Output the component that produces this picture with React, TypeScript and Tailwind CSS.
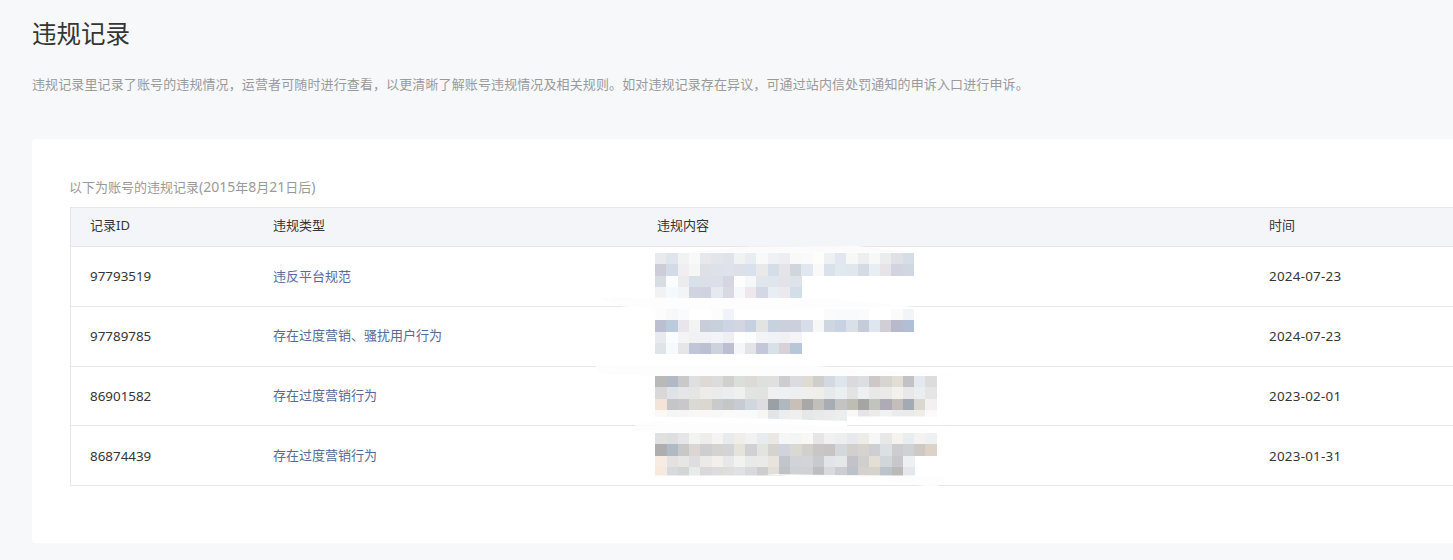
const MOSAICS = [
  {
    cols: 23,
    top: "mt-[6px]",
    rows: [
      "e9eaee e0e4ec f3f2f3 f9f9f9 e7e8eb e4e5ea e0e3ea f1f2f2 e9edf1 f8f9f8 f0f1f4 eeeef2 f9f9f8 fafafa fdfdfc eff0f3 e1e6f0 f7f8f6 eceef0 f7f8f8 ebecee e0e0e6 d5dde7",
      "cdcdda d3dce6 f0eef0 f6f6f6 dfe0e5 dce1ea dfe2eb dedfe8 d9e2ec e9e9e9 d5dde8 e4e4e9 d1d5de e1e7ee f9f9f9 d9e2ea e1e9f0 e1e7ee d5dbe4 e9eef4 e7e3e6 d3d3df d0d7e3",
      "d7dde3 fbfcfd ecebee d8e0e9 dadfe8 dcdfe9 d5d6e2 fdfdfd f6f7f9 e1e5ec dfe6ed e4e1e8 dce3ea",
      "f1f2f4 f5f9fc f3f4f5 d0d3e0 cfd2df e6e9f1 d8d9e3 f7f8f9 ece8ec d3d8e4 e9eef5 ece9ee d2dfe8",
    ],
  },
  {
    cols: 23,
    top: "mt-[2px]",
    rows: [
      "fcfcfc f7f8fa fafbfc ffffff ffffff fcfcfd f2f3f8 ffffff ffffff ffffff ffffff ffffff ffffff ffffff ffffff fbfbfb f8fafb f9fafb f9fbfc ffffff ffffff fbfbfb f2f4f8",
      "bbbfd0 bccbdc e8e6ea f3f3f4 cacdd9 c8d0de cdd5e5 d3d6e0 c5d1e0 e2e3e3 c7d1e0 cccfdc cccfdc d9dde9 f7f7f7 ced6e0 c7d3e2 d9e0e8 c6cbd9 dee6f0 d1ced5 b8b9cc b0bfd5",
      "e9eaef fafcfe f4f4f6 f0f1f4 f1f2f6 f3f4f7 efeef2 fefefe fbfcfc f3f4f6 f1f2f6 f1f1f5 f4f4f8",
      "dfe4e8 f5fafc e6e6e9 c0c6d8 bcc0d3 ced2dd bcbed2 f5f6f9 e4e3e6 c3c8d9 d8e1ea d6d2d8 b7c6d8",
    ],
  },
  {
    cols: 25,
    top: "mt-[9px]",
    rows: [
      "b9b9b9 b0b9c5 c9c9c9 dfdfe2 dfd9d5 dcdcdc d1d0cf dadfdb dcdad6 dde0de e0e0e0 cdccd0 dcdce0 dedcd2 cfcecb d3d8e1 dfe5ed d9d9de dbdfe2 cdc8c6 d7d5d2 e1ded6 c2c2c6 e3e9ee dcdcda",
      "d8d8d8 dfe2e7 e6e6e8 e5e5e3 eeecea ebebeb ecedee f0f1ef e3e3e1 e2e2e0 f0f0f0 eff0f2 eeeff0 efefed f0eeeb e7e9ed eceff2 e3e3e4 eef0f1 e8e8e8 eceae8 f3f1ed e8e8ea ebeef0 e5e5e5",
      "f3e3d8 c5c5c8 c9c7c9 dadad5 dad6d0 c8cacc c6c6c6 c8ccd2 d0d8de dddde0 9ba0a5 b0b8be c9bfb9 a8a8a8 c0bfbc a7adb2 c3c3c3 bdbdb5 a5a5a5 c0c4bd aeabb4 c4bebb a4aab2 d8d8d0 f5f0f0",
      "fbf8f5 f5f5f5 f6f6f6 f8f8f6 f9f8f6 f8f8f8 fafafa fafafa f9fafa f6f7f5 e3e4e5 ecedef f0eff0 e6e8e8 e8eaea ebebeb eceded f8f8f8 e5e5e5 ecebe9 f0f1f3 e9ebec e9ebeb eeede9 fbf9f9",
    ],
  },
  {
    cols: 25,
    top: "mt-[7px]",
    rows: [
      "e0e0e0 dcdee0 e6e6e8 f2f3f3 efedeb f3f4f3 e8eaec f0eeeb f2f2f2 e8ecef e9e8e5 f5f6f6 f4f5f5 f8f8f7 e6e6e8 f1f1f1 eceef0 e8e9ec ecece9 f7f7f7 e8e8e9 f5f3f0 e9edef f5f2f1 eef0f1",
      "aeaeae b0bac5 c8c8c8 dbd6d3 cdced0 d5d3d1 d2d4d8 e5e3da d1d0d3 e3e4e0 d5d3d0 ced3de d9d8d1 d2d0cc cbc6c6 c6c4c5 d4d8dd d2d0cd d6d2cd cecfd2 dce0e2 cdcccf d0d1d3 cec9c4 dcd2c8",
      "f7ece4 e4e2e0 e6e6e4 dededf ebeae8 f2f0ed e8e8e9 f1f3f1 e8eae9 eaebe9 e7e4dd c2c5ca d2d3d8 d3d4d8 c9cacd e3e4e7 e6e7e8 c3c2c9 cfcfd0 e4dfd5 d0d6da c9c6cc ecf0f1",
      "f6e9dd d8d9dc d3d6d5 e9eaea d9d9db dcdcdc dfdedc dfe1e4 d8d9dc cdcdcd e0dfd9 bfc2c6 cfd1d5 d0d1d4 bbbfbf d9dadd cbcdd0 bcc2c9 d5d1cf d6d2ce bcc3c9 bcbab7 e5e8ea",
    ],
  },
];

const RECORDS = [
  { id: "97793519", type: "违反平台规范", date: "2024-07-23" },
  { id: "97789785", type: "存在过度营销、骚扰用户行为", date: "2024-07-23" },
  { id: "86901582", type: "存在过度营销行为", date: "2023-02-01" },
  { id: "86874439", type: "存在过度营销行为", date: "2023-01-31" },
];

// 打码区域，每格约 11px
function Mosaic({ cols, rows }: { cols: number; rows: string[] }) {
  const cell = 11.26;
  return (
    <svg width={Math.round(cols * cell)} height={45} viewBox={`0 0 ${cols * cell} 45`} shapeRendering="crispEdges" className="-ml-0.5 block">
      {rows.map((row, y) =>
        row.split(" ").map((color, x) => (
          <rect key={`${x}-${y}`} x={x * cell} y={y * 11.25} width={cell + 0.5} height={11.5} fill={`#${color}`} />
        ))
      )}
    </svg>
  );
}

// 截图涂抹痕迹，盖在表格线和打码块上
function Smudges() {
  return (
    <svg width={1453} height={560} viewBox="0 0 1453 560" className="pointer-events-none absolute inset-0">
      <polygon points="683,252.5 750,246.5 857,246 913,252 913,252.5" fill="#fbfbfb" />
      <polygon points="597,297.5 830,298.7 913,306.7 790,308.7 657,308.7 623,306.5" fill="#fdfdfd" />
      <polygon points="595,365 800,365 963,375.5 650,375.7 600,374" fill="#fdfdfd" />
      <polygon points="655,416.5 740,418 847,421 847,416.5 936.5,416.5 936.5,421 847,421 847,426 655,426" fill="#ffffff" />
      <polygon points="635,425 655,421 847,426 965,431 655,432.7 635,431" fill="#fdfdfd" opacity={0.85} />
      <rect x={655} y={475.5} width={282} height={3} fill="#ffffff" />
      <polygon points="765,474 945,476.7 937,487 900,483.5 860,477 800,477" fill="#fdfdfd" />
    </svg>
  );
}

export default function App() {
  return (
    <div className="relative h-[560px] w-[1453px] overflow-hidden bg-[#f7f8fa] font-['Noto_Sans','Noto_Sans_CJK_SC',sans-serif] text-[13px] text-[#353535]">
      <div className="pl-8 pt-[18px]">
        <h1 className="text-[24.5px] leading-8 font-normal text-[#353535]">违规记录</h1>
        <p className="mt-[22px] leading-6 tracking-[0.115px] text-[#9a9a9a]">
          违规记录里记录了账号的违规情况，运营者可随时进行查看，以更清晰了解账号违规情况及相关规则。如对违规记录存在异议，可通过站内信处罚通知的申诉入口进行申诉。
        </p>
        <div className="mt-[43px] h-[404px] w-[1500px] rounded-sm bg-white pl-[38px] pt-[37px]">
          <p className="mb-[9px] -ml-px leading-[22px] text-[#9a9a9a]">
            以下为账号的违规记录<span className="text-sm">(2015</span>年<span className="text-sm">8</span>月<span className="text-sm">21</span>日后<span className="text-sm">)</span>
          </p>
          <div className="w-[1440px] border border-[#e7e7eb]">
            <div className="flex h-[39px] items-center border-b border-[#e7e7eb] bg-[#f4f5f9] pb-0.5 pl-[19px]">
              <span className="w-[183px]">记录ID</span>
              <span className="w-[384px]">违规类型</span>
              <span className="w-[612px]">违规内容</span>
              <span>时间</span>
            </div>
            {RECORDS.map((record, i) => (
              <div key={record.id} className="flex h-[59.75px] items-center border-b border-[#e7e7eb] pl-[19px] last:h-[58.75px] last:border-b-0">
                <span className="w-[183px] text-[13.4px]">{record.id}</span>
                <span className="w-[384px] text-[#576b95]">{record.type}</span>
                <span className={`w-[612px] self-start ${MOSAICS[i].top}`}>
                  <Mosaic cols={MOSAICS[i].cols} rows={MOSAICS[i].rows} />
                </span>
                <span className="text-[13.4px] tracking-[0.25px]">{record.date}</span>
              </div>
            ))}
          </div>
        </div>
      </div>
      <Smudges />
    </div>
  );
}
